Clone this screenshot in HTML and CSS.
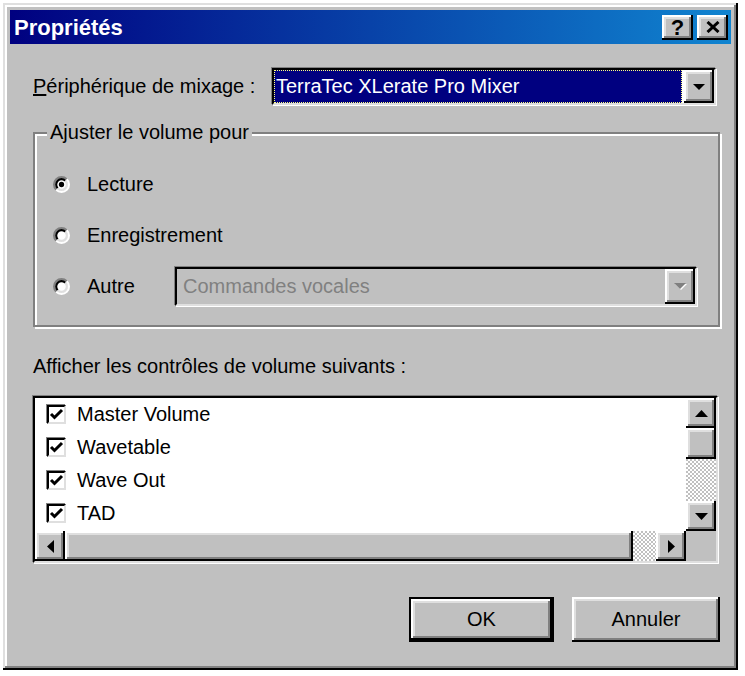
FILE: index.html
```html
<!DOCTYPE html>
<html lang="fr">

<head>
  <meta charset="UTF-8">
  <meta name="viewport" content="width=device-width, initial-scale=1.0">
  <title>Propriétés</title>
  <link rel="stylesheet" href="styles.css">
</head>

<body>
  <div class="window">
    <!-- Title bar -->
    <div class="titlebar">
      <span class="title">Propriétés</span>
      <div class="title-buttons">
        <div class="tbtn raised help">?</div>
        <div class="tbtn raised">
          <svg width="14" height="12" viewBox="0 0 14 12">
            <path d="M1.5 1 L12.5 11 M12.5 1 L1.5 11" stroke="#000" stroke-width="3" fill="none" />
          </svg>
        </div>
      </div>
    </div>

    <div class="dialog">
      <div class="device-row">
        <label class="device-label"><u>P</u>ériphérique de mixage :</label>
        <div class="combo sunken device">
          <div class="combo-value selected">TerraTec XLerate Pro Mixer</div>
          <div class="drop-btn raised">
            <svg width="12" height="6" viewBox="0 0 12 6"><polygon points="0,0 12,0 6,6" fill="#000" /></svg>
          </div>
        </div>
      </div>

      <fieldset class="group">
        <legend>Ajuster le volume pour</legend>
        <div class="radio-row">
          <svg class="radio" width="17" height="17" viewBox="0 0 16 16">
            <circle cx="8" cy="8" r="6" fill="#fff" />
            <path d="M3.05 12.95 A7 7 0 0 1 12.95 3.05" stroke="#808080" stroke-width="2" fill="none" />
            <path d="M3.05 12.95 A7 7 0 0 0 12.95 3.05" stroke="#fff" stroke-width="2" fill="none" />
            <path d="M4.46 11.54 A5 5 0 0 1 11.54 4.46" stroke="#000" stroke-width="2" fill="none" />
            <path d="M4.46 11.54 A5 5 0 0 0 11.54 4.46" stroke="#dfdfdf" stroke-width="2" fill="none" />
            <circle cx="8" cy="8" r="2.5" fill="#000" />
          </svg>
          <span>Lecture</span>
        </div>
        <div class="radio-row">
          <svg class="radio" width="17" height="17" viewBox="0 0 16 16">
            <circle cx="8" cy="8" r="6" fill="#fff" />
            <path d="M3.05 12.95 A7 7 0 0 1 12.95 3.05" stroke="#808080" stroke-width="2" fill="none" />
            <path d="M3.05 12.95 A7 7 0 0 0 12.95 3.05" stroke="#fff" stroke-width="2" fill="none" />
            <path d="M4.46 11.54 A5 5 0 0 1 11.54 4.46" stroke="#000" stroke-width="2" fill="none" />
            <path d="M4.46 11.54 A5 5 0 0 0 11.54 4.46" stroke="#dfdfdf" stroke-width="2" fill="none" />
          </svg>
          <span>Enregistrement</span>
        </div>
        <div class="radio-row">
          <svg class="radio" width="17" height="17" viewBox="0 0 16 16">
            <circle cx="8" cy="8" r="6" fill="#fff" />
            <path d="M3.05 12.95 A7 7 0 0 1 12.95 3.05" stroke="#808080" stroke-width="2" fill="none" />
            <path d="M3.05 12.95 A7 7 0 0 0 12.95 3.05" stroke="#fff" stroke-width="2" fill="none" />
            <path d="M4.46 11.54 A5 5 0 0 1 11.54 4.46" stroke="#000" stroke-width="2" fill="none" />
            <path d="M4.46 11.54 A5 5 0 0 0 11.54 4.46" stroke="#dfdfdf" stroke-width="2" fill="none" />
          </svg>
          <span class="radio-text">Autre</span>
          <div class="combo sunken disabled">
            <div class="combo-value">Commandes vocales</div>
            <div class="drop-btn raised">
              <svg width="13" height="7" viewBox="0 0 13 7">
                <polygon points="1,1 13,1 7,7" fill="#fff" />
                <polygon points="0,0 12,0 6,6" fill="#808080" />
              </svg>
            </div>
          </div>
        </div>
      </fieldset>

      <div class="list-label">Afficher les contrôles de volume suivants :</div>

      <div class="listbox sunken">
        <div class="list-items">
          <div class="item"><span class="check sunken"><svg width="15" height="15" viewBox="0 0 15 15"><polyline points="2,7 5.5,10.5 13,3" stroke="#000" stroke-width="3" fill="none" /></svg></span>Master Volume</div>
          <div class="item"><span class="check sunken"><svg width="15" height="15" viewBox="0 0 15 15"><polyline points="2,7 5.5,10.5 13,3" stroke="#000" stroke-width="3" fill="none" /></svg></span>Wavetable</div>
          <div class="item"><span class="check sunken"><svg width="15" height="15" viewBox="0 0 15 15"><polyline points="2,7 5.5,10.5 13,3" stroke="#000" stroke-width="3" fill="none" /></svg></span>Wave Out</div>
          <div class="item"><span class="check sunken"><svg width="15" height="15" viewBox="0 0 15 15"><polyline points="2,7 5.5,10.5 13,3" stroke="#000" stroke-width="3" fill="none" /></svg></span>TAD</div>
        </div>

        <div class="vscroll">
          <div class="sbtn raised">
            <svg width="13" height="7" viewBox="0 0 13 7"><polygon points="0,7 13,7 6.5,0" fill="#000" /></svg>
          </div>
          <div class="thumb raised"></div>
          <div class="track"></div>
          <div class="sbtn raised">
            <svg width="13" height="7" viewBox="0 0 13 7"><polygon points="0,0 13,0 6.5,7" fill="#000" /></svg>
          </div>
        </div>

        <div class="hscroll">
          <div class="sbtn raised">
            <svg width="7" height="13" viewBox="0 0 7 13"><polygon points="7,0 7,13 0,6.5" fill="#000" /></svg>
          </div>
          <div class="thumb raised"></div>
          <div class="track"></div>
          <div class="sbtn raised">
            <svg width="7" height="13" viewBox="0 0 7 13"><polygon points="0,0 0,13 7,6.5" fill="#000" /></svg>
          </div>
        </div>

        <div class="corner"></div>
      </div>

      <div class="buttons">
        <div class="button raised default">OK</div>
        <div class="button raised cancel">Annuler</div>
      </div>
    </div>
  </div>
</body>

</html>
```

FILE: styles.css
```css
body {
  margin: 0;
  background: #fff;
  font-family: "Liberation Sans", Arial, sans-serif;
  font-size: 20px;
  line-height: 23px;
  color: #000;
}

/* Window frame */
.window {
  box-sizing: border-box;
  width: 735px;
  height: 667px;
  margin: 3px;
  padding: 7px;
  background: #c0c0c0;
  box-shadow: inset -2px -2px 0 #000, inset 2px 2px 0 #dfdfdf, inset -4px -4px 0 #808080, inset 4px 4px 0 #fff;
}

/* Shared 3D edges */
.raised {
  background: #c0c0c0;
  box-shadow: inset -2px -2px 0 #000, inset 2px 2px 0 #fff, inset -4px -4px 0 #808080, inset 4px 4px 0 #dfdfdf;
}

.sunken {
  box-sizing: border-box;
  border: 2px solid;
  border-color: #000 #dfdfdf #dfdfdf #000;
  box-shadow: -1px -1px 0 #808080, 1px 1px 0 #fff;
}

.titlebar {
  height: 34px;
  display: flex;
  align-items: center;
  justify-content: space-between;
  padding: 0 3px 0 4px;
  background: linear-gradient(to right, #000080, #1084d0);
}

.title {
  color: #fff;
  font-weight: bold;
  font-size: 22px;
}

.title-buttons {
  display: flex;
  gap: 4px;
}

.tbtn {
  width: 31px;
  height: 25px;
  display: flex;
  align-items: center;
  justify-content: center;
  font-weight: bold;
  font-size: 22px;
}

.dialog {
  padding: 24px 11px 0 23px;
}

.device-row {
  display: flex;
  align-items: center;
  height: 37px;
}

.device-label {
  width: 239px;
}

.combo {
  display: flex;
  background: #fff;
}

.combo.device {
  width: 444px;
  height: 37px;
}

.combo-value {
  flex: 1;
  display: flex;
  align-items: center;
  padding-left: 2px;
  white-space: nowrap;
}

.combo-value.selected {
  background: #000080;
  color: #fff;
  outline: 1px dotted #ffff80;
  outline-offset: -1px;
  margin-right: 2px;
}

.drop-btn {
  width: 30px;
  display: flex;
  align-items: center;
  justify-content: center;
}

.combo.disabled {
  width: 522px;
  height: 39px;
  background: #c0c0c0;
  color: #808080;
}

.combo.disabled .combo-value {
  padding-left: 6px;
}

/* Group box */
.group {
  box-sizing: border-box;
  width: 687px;
  min-width: 0;
  margin: 16px 0 0;
  padding: 20px 21px 19px 18px;
  border: 2px solid #808080;
  box-shadow: inset 2px 2px 0 #fff, 2px 2px 0 #fff;
}

.group legend {
  padding: 0 3px;
  margin-left: -6px;
  background: #c0c0c0;
}

.radio-row {
  display: flex;
  align-items: center;
  height: 40px;
}

.radio-row + .radio-row {
  margin-top: 11px;
}

.radio {
  flex: none;
  margin-right: 17px;
}

.radio-text {
  width: 88px;
}

.list-label {
  margin-top: 28px;
}

/* List with checkboxes */
.listbox {
  width: 685px;
  height: 167px;
  margin-top: 18px;
  background: #fff;
  display: grid;
  grid-template-columns: 1fr 30px;
  grid-template-rows: 1fr 30px;
}

.list-items {
  overflow: hidden;
  padding-left: 12px;
}

.item {
  display: flex;
  align-items: center;
  height: 33px;
}

.check {
  width: 19px;
  height: 19px;
  margin-right: 11px;
  background: #fff;
  display: flex;
  align-items: center;
  justify-content: center;
}

.vscroll {
  display: flex;
  flex-direction: column;
}

.sbtn {
  display: flex;
  align-items: center;
  justify-content: center;
}

.vscroll .sbtn {
  height: 30px;
}

.vscroll .thumb {
  height: 31px;
}

.hscroll {
  display: flex;
}

.hscroll .sbtn {
  width: 30px;
}

.hscroll .thumb {
  width: 568px;
}

.track {
  flex: 1;
  background-image: repeating-conic-gradient(#fff 0% 25%, #c0c0c0 0% 50%);
  background-size: 4px 4px;
}

.corner {
  background: #c0c0c0;
}

.buttons {
  display: flex;
  justify-content: flex-end;
  gap: 18px;
  margin-top: 34px;
}

.button {
  box-sizing: border-box;
  width: 148px;
  height: 45px;
  display: flex;
  align-items: center;
  justify-content: center;
}

.button.default {
  width: 145px;
  border: 2px solid #000;
}
```
